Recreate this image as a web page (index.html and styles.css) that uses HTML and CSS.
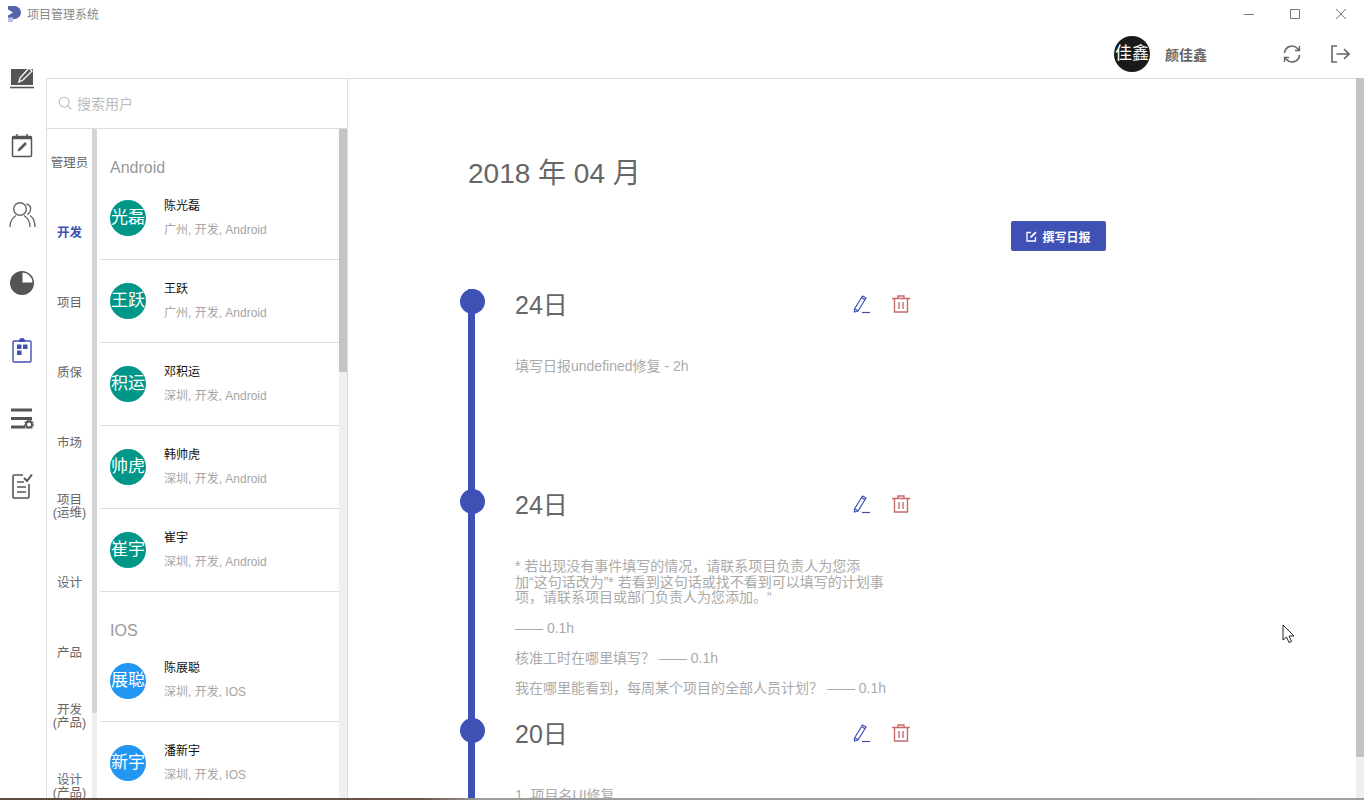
FILE: index.html
```html
<!DOCTYPE html>
<html lang="zh-CN">
<head>
<meta charset="utf-8">
<title>项目管理系统</title>
<link rel="stylesheet" href="styles.css">
</head>
<body>
<div class="app">
  <div class="titlebar">
    <svg class="logo" width="13" height="16" viewBox="0 0 13 16"><path d="M0 0h6.500a6.500 6.500 0 0 1 0 13H5v3H0z" fill="#5563ab"/><path d="M0 11.500h5V16H0z" fill="#b9c2e4"/><path d="M0 3.500l5 3-5 3z" fill="#fff"/></svg>
    <span class="app-name">项目管理系统</span>
    <div class="winctl">
      <svg width="12" height="12" viewBox="0 0 12 12"><path d="M1 6.500h10" stroke="#777" fill="none"/></svg>
      <svg width="12" height="12" viewBox="0 0 12 12"><path d="M1.500 1.500h9v9h-9z" stroke="#777" fill="none"/></svg>
      <svg width="12" height="12" viewBox="0 0 12 12"><path d="M1 1l10 10M11 1L1 11" stroke="#777" fill="none"/></svg>
    </div>
  </div>
  <div class="userbar">
    <div class="avatar dark">佳鑫</div>
    <span class="user-name">颜佳鑫</span>
    <svg class="ub-refresh" width="20" height="20" viewBox="0 0 20 20" fill="none" stroke="#666" stroke-width="1.700"><path d="M2.500 9a7.500 7.500 0 0 1 13-4.500L17 6M17.500 11a7.500 7.500 0 0 1-13 4.500L3 14"/><path d="M17.500 2v4.500H13M2.500 18v-4.500H7" stroke-width="1.400"/></svg>
    <svg class="ub-exit" width="20" height="20" viewBox="0 0 20 20" fill="none" stroke="#666" stroke-width="1.600"><path d="M7 2H2v16h5"/><path d="M6.500 10H19M14 5l5 5-5 5"/></svg>
  </div>
  <div class="body">
    <nav class="rail">
      <div class="rail-item"><svg width="26" height="24" viewBox="0 0 26 24"><path d="M2 3h22v16H2z" fill="#555"/><path d="M1 21.500h24" stroke="#555" stroke-width="1.600"/><path d="M10 16l1-4 9-10 3 3-9 9z" fill="#555" stroke="#fff" stroke-width="1.300"/></svg></div>
      <div class="rail-item"><svg width="26" height="26" viewBox="0 1 26 26" fill="none" stroke="#555" stroke-width="1.500"><rect x="3.500" y="4.500" width="19" height="20" rx="1"/><path d="M3 6h20" stroke-width="2.500"/><path d="M8 2v3M18 2v3"/><path d="M9 19l1-2.500 6-6 1.500 1.500-6 6z" fill="#555" stroke-width=".8"/></svg></div>
      <div class="rail-item"><svg width="28" height="28" viewBox="0 -1 28 28" fill="none" stroke="#666" stroke-width="1.400"><circle cx="12" cy="8" r="6.300"/><path d="M2 26c0-6 2-9 6-11.500M16 14.500c4 2.500 6 5.500 6 11.500"/><path d="M18.500 3c3 .8 4.500 3 4 6s-2 4-3 4.500M22 14.500c3 2 5 5 5 11.500"/></svg></div>
      <div class="rail-item"><svg width="26" height="26" viewBox="0 -1 26 26"><circle cx="13" cy="13" r="12" fill="#555"/><path d="M13.500 2.500a10.500 10.500 0 0 1 10 10h-10z" fill="#fff"/></svg></div>
      <div class="rail-item"><svg width="20" height="26" viewBox="0 0 20 26"><path d="M2 4h16a1 1 0 0 1 1 1v19a1 1 0 0 1-1 1H2a1 1 0 0 1-1-1V5a1 1 0 0 1 1-1z" fill="#fff" stroke="#3f51b5" stroke-width="1.400"/><path d="M7 4a3 3 0 0 1 6 0v1H7z" fill="#3f51b5"/><path d="M5 7.500h4.500V12H5zM11 7.500h4.500V12H11zM5 13.500h4.500V18H5z" fill="#3f51b5"/></svg></div>
      <div class="rail-item"><svg width="24" height="22" viewBox="0 0 24 22"><path d="M1 3h21M1 11.500h21" stroke="#555" stroke-width="3"/><path d="M1 20h14" stroke="#555" stroke-width="3"/><circle cx="19" cy="17.500" r="3" fill="#fff" stroke="#555" stroke-width="2"/><circle cx="19" cy="17.500" r="4.400" fill="none" stroke="#555" stroke-width="1.200" stroke-dasharray="1.500 1.500"/></svg></div>
      <div class="rail-item"><svg width="22" height="26" viewBox="0 0 22 26" fill="none" stroke="#555" stroke-width="1.600"><path d="M12 2H3a1 1 0 0 0-1 1v21a1 1 0 0 0 1 1h14a1 1 0 0 0 1-1V11"/><path d="M6 9h7M6 14h9M6 19h9"/><path d="M13 5l3 3 5-6.500" stroke-width="2"/></svg></div>
    </nav>
    <section class="panel">
      <div class="search">
        <svg width="14" height="14" viewBox="0 0 14 14" fill="none" stroke="#bbb" stroke-width="1.100"><circle cx="6.200" cy="6.200" r="5"/><path d="M10 10l3.300 3.300"/></svg>
        <span>搜索用户</span>
      </div>
      <div class="panel-body">
        <ul class="cats">
          <li>管理员</li>
          <li class="on">开发</li>
          <li>项目</li>
          <li>质保</li>
          <li>市场</li>
          <li class="up">项目<br>(运维)</li>
          <li>设计</li>
          <li>产品</li>
          <li class="up">开发<br>(产品)</li>
          <li class="up">设计<br>(产品)</li>
        </ul>
        <div class="track thin"><div class="thumb cat-thumb"></div></div>
        <div class="people">
          <h3>Android</h3>
          <div class="person"><div class="avatar teal">光磊</div><div class="who"><b>陈光磊</b><small>广州, 开发, Android</small></div></div>
          <div class="person"><div class="avatar teal">王跃</div><div class="who"><b>王跃</b><small>广州, 开发, Android</small></div></div>
          <div class="person"><div class="avatar teal">积运</div><div class="who"><b>邓积运</b><small>深圳, 开发, Android</small></div></div>
          <div class="person"><div class="avatar teal">帅虎</div><div class="who"><b>韩帅虎</b><small>深圳, 开发, Android</small></div></div>
          <div class="person"><div class="avatar teal">崔宇</div><div class="who"><b>崔宇</b><small>深圳, 开发, Android</small></div></div>
          <h3>IOS</h3>
          <div class="person short"><div class="avatar blue">展聪</div><div class="who"><b>陈展聪</b><small>深圳, 开发, IOS</small></div></div>
          <div class="person"><div class="avatar blue">新宇</div><div class="who"><b>潘新宇</b><small>深圳, 开发, IOS</small></div></div>
        </div>
        <div class="track"><div class="thumb list-thumb"></div></div>
      </div>
    </section>
    <main class="main">
      <h1>2018 年 04 月</h1>
      <div class="actions">
        <button class="write"><svg width="11" height="11" viewBox="0 0 11 11" fill="none" stroke="#fff" stroke-width="1.300"><path d="M9.500 6v4H1V1.500h4"/><path d="M4.500 6.500l.3-1.500L9.300.8l1 1L6 6.200z" fill="#fff" stroke-width=".5"/></svg>撰写日报</button>
      </div>
      <div class="timeline">
        <article class="entry e1">
          <header>
            <span class="dot"></span>
            <h2>24日</h2>
            <svg class="ed" width="18" height="20" viewBox="0 0 18 20" fill="none" stroke="#3f51b5" stroke-width="1.200"><path d="M1.500 15l8-13 3.500 2-8 13-3.500 1z"/><path d="M8.500 3.500l3.500 2.200M2 15l3 1.800"/><path d="M9 18.500h8"/></svg>
            <svg class="del" width="18" height="18" viewBox="0 0 18 18" fill="none" stroke="#c96a6a" stroke-width="1.400"><path d="M0 3.500h18M6 3V1h6v2M2.500 4v13h13V4M7 7v7M11 7v7"/></svg>
          </header>
          <div class="text"><p>填写日报undefined修复 - 2h</p></div>
        </article>
        <article class="entry e2">
          <header>
            <span class="dot"></span>
            <h2>24日</h2>
            <svg class="ed" width="18" height="20" viewBox="0 0 18 20" fill="none" stroke="#3f51b5" stroke-width="1.200"><path d="M1.500 15l8-13 3.500 2-8 13-3.500 1z"/><path d="M8.500 3.500l3.500 2.200M2 15l3 1.800"/><path d="M9 18.500h8"/></svg>
            <svg class="del" width="18" height="18" viewBox="0 0 18 18" fill="none" stroke="#c96a6a" stroke-width="1.400"><path d="M0 3.500h18M6 3V1h6v2M2.500 4v13h13V4M7 7v7M11 7v7"/></svg>
          </header>
          <div class="text">
            <p>* 若出现没有事件填写的情况，请联系项目负责人为您添加&#8288;“&#8288;这句话改为”* 若看到这句话或找不看到可以填写的计划事项，请联系项目或部门负责人为您添加。“</p>
            <p>—— 0.1h</p>
            <p>核准工时在哪里填写？ —— 0.1h</p>
            <p>我在哪里能看到，每周某个项目的全部人员计划？ —— 0.1h</p>
          </div>
        </article>
        <article class="entry e3">
          <header>
            <span class="dot"></span>
            <h2>20日</h2>
            <svg class="ed" width="18" height="20" viewBox="0 0 18 20" fill="none" stroke="#3f51b5" stroke-width="1.200"><path d="M1.500 15l8-13 3.500 2-8 13-3.500 1z"/><path d="M8.500 3.500l3.500 2.200M2 15l3 1.800"/><path d="M9 18.500h8"/></svg>
            <svg class="del" width="18" height="18" viewBox="0 0 18 18" fill="none" stroke="#c96a6a" stroke-width="1.400"><path d="M0 3.500h18M6 3V1h6v2M2.500 4v13h13V4M7 7v7M11 7v7"/></svg>
          </header>
          <div class="text"><p>1. 项目名UI修复</p></div>
        </article>
      </div>
    </main>
    <div class="track"><div class="thumb main-thumb"></div></div>
  </div>
  <svg class="cursor" width="14" height="20" viewBox="0 0 14 20"><path d="M1 1v15l3.500-3 2.500 5.500 2.500-1-2.500-5.500h5z" fill="#fff" stroke="#222"/></svg>
  <div class="edge"></div>
</div>
</body>
</html>
```
FILE: styles.css
```css
* { box-sizing: border-box; }
html, body { margin: 0; height: 100%; overflow: hidden; background: #fff; }
body { font-family: "Liberation Sans", "Noto Sans CJK SC", sans-serif; color: #555; }
.app { position: relative; width: 1364px; height: 800px; display: flex; flex-direction: column; overflow: hidden; }

.titlebar { height: 30px; flex: none; display: flex; align-items: flex-start; padding: 6px 0 0 8px; }
.logo { flex: none; }
.app-name { margin: 2px 0 0 6px; font-size: 12px; line-height: 14px; color: #888; }
.winctl { margin: 2px 17px 0 auto; display: flex; gap: 34px; }

.userbar { height: 48px; flex: none; display: flex; align-items: center; padding-left: 1114px; }
.avatar { width: 36px; height: 36px; flex: none; border-radius: 50%; color: #fff; font-size: 17px; line-height: 36px; text-align: center; white-space: nowrap; overflow: hidden; }
.dark { background: #1a1a1a; }
.teal { background: #009688; }
.blue { background: #2196f3; }
.user-name { margin-left: 15px; width: 117px; font-size: 14px; font-weight: 700; color: #666; }
.ub-exit { margin-left: 28px; }

.body { flex: 1; min-height: 0; display: flex; }
.rail { width: 46px; flex: none; display: flex; flex-direction: column; margin-top: -34px; padding-right: 2px; }
.rail-item { height: 68px; flex: none; display: flex; align-items: center; justify-content: center; }

.panel { width: 302px; flex: none; display: flex; flex-direction: column; border-left: 1px solid #ddd; border-right: 1px solid #ddd; border-top: 1px solid #ddd; }
.search { height: 50px; flex: none; display: flex; align-items: center; gap: 5px; padding: 0 0 1px 11px; border-bottom: 1px solid #ddd; font-size: 14px; color: #bbb; }
.panel-body { flex: 1; min-height: 0; display: flex; }
.cats { width: 45px; flex: none; margin: 0; padding: 0; list-style: none; overflow: hidden; }
.cats li { height: 70px; display: flex; align-items: center; justify-content: center; text-align: center; font-size: 12.500px; line-height: 13px; color: #666; }
.cats li:first-child { height: 69px; padding-bottom: 1px; }
.cats li.on { color: #3f51b5; font-weight: 700; }
.cats li.up { padding-bottom: 12px; }

.track { width: 8px; flex: none; background: #efefef; }
.track.thin { width: 5px; }
.thumb { background: #c4c4c4; }
.cat-thumb { height: 584px; background: #d4d4d4; }
.list-thumb { height: 243px; }
.main-thumb { height: 679px; }

.people { width: 239px; flex: none; margin-left: 3px; overflow: hidden; }
.people h3 { margin: 0; height: 48px; padding: 29px 0 0 10px; font-size: 16px; line-height: 20px; font-weight: 400; color: #999; }
.person { height: 83px; display: flex; align-items: center; padding: 0 0 0 10px; border-bottom: 1px solid #ddd; }
.person.short { height: 82px; }
.who { margin-left: 18px; padding-bottom: 1px; display: flex; flex-direction: column; }
.who b { font-size: 12px; line-height: 16px; font-weight: 400; color: #111; }
.who small { margin-top: 8px; font-size: 12px; line-height: 16px; color: #a5a5a5; }

.main { flex: 1; min-width: 0; padding: 0 0 0 120px; overflow: hidden; border-top: 1px solid #ddd; }
.main h1 { margin: 77px 0 0; font-size: 28px; line-height: 36px; font-weight: 400; color: #666; }
.actions { width: 638px; margin-top: 29px; display: flex; justify-content: flex-end; }
.write { width: 95px; height: 30px; display: flex; align-items: center; justify-content: center; gap: 5px; border: 0; border-radius: 2px; padding: 0; background: #3f51b5; color: #fff; font: 700 12px "Liberation Sans", "Noto Sans CJK SC", sans-serif; }

.timeline { margin-top: 38px; width: 450px; }
.entry { border-left: 7px solid #3f51b5; padding-left: 40px; }
.e1 { height: 200px; }
.e2 { height: 229px; }
.e3 { height: 200px; }
.entry header { position: relative; height: 30px; display: flex; align-items: center; }
.dot { position: absolute; left: -55px; top: 0; width: 25px; height: 25px; border-radius: 50%; background: #3f51b5; }
.entry h2 { margin: 2px 0 0; width: 338px; font-size: 25px; line-height: 28px; font-weight: 400; color: #666; }
.del { margin-left: 21px; }
.text { margin-top: 40px; width: 372px; font-size: 14px; line-height: 15.600px; color: #aaa; }
.text p { margin: 0 0 14.800px; }

.cursor { position: absolute; left: 1282px; top: 624px; }
.edge { position: absolute; left: 0; right: 0; bottom: 0; height: 2px; background: linear-gradient(90deg, #5b4a40 0, #6b5548 420px, #9c9c9c 480px, #a0a0a0 100%); }
```
